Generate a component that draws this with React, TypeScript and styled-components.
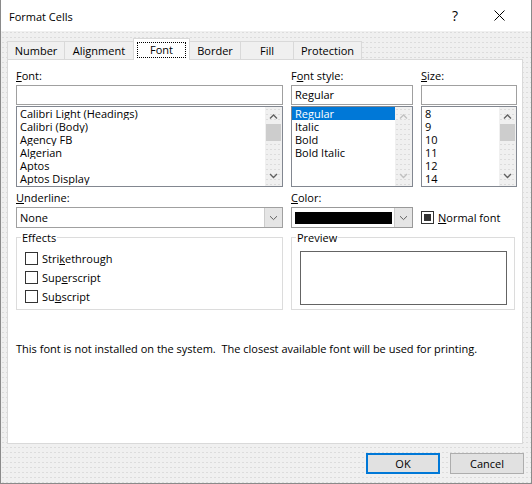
import React from "react";
import styled, { createGlobalStyle, css } from "styled-components";

const FONT = `"Open Sans", "Noto Sans", "DejaVu Sans", sans-serif`;

const GlobalStyle = createGlobalStyle`
  * { box-sizing: border-box; }
  html, body { margin: 0; padding: 0; background: #f0f0f0; }
  body { font-family: ${FONT}; font-size: 11px; color: #000; }
  #root { width: 532px; height: 484px; }
`;

const dotted = css`
  background-color: #f0f0f0;
  background-image: radial-gradient(circle, #dcdcdc 0.55px, transparent 0.9px);
  background-size: 4px 5px;
`;

const Window = styled.div`
  width: 532px;
  height: 484px;
  display: flex;
  flex-direction: column;
  border: 1px solid #8a8a8a;
  border-top: none;
  ${dotted}
`;

const TitleBar = styled.div`
  height: 31px;
  flex: none;
  background: #fff;
  display: flex;
  align-items: center;
  padding: 0 26px 0 8px;
`;

const Title = styled.div`
  flex: 1;
  font-size: 11px;
  padding-top: 1px;
`;

const HelpGlyph = styled.span`
  width: 12px;
  text-align: center;
  font-size: 14px;
  line-height: 1;
  margin-right: 33px;
`;

const Body = styled.div`
  flex: 1;
  display: flex;
  flex-direction: column;
  padding: 7px 8px 9px 6px;
`;

const TabStrip = styled.div`
  display: flex;
  align-items: flex-end;
  height: 21px;
  flex: none;
`;

const Tab = styled.div<{ $w: number; $active?: boolean }>`
  width: ${(p) => p.$w}px;
  height: ${(p) => (p.$active ? 22 : 18)}px;
  margin-bottom: ${(p) => (p.$active ? -1 : 0)}px;
  margin-left: -1px;
  &:first-child {
    margin-left: 0;
  }
  border: 1px solid #d9d9d9;
  border-bottom: none;
  background: ${(p) => (p.$active ? "#fff" : "#f0f0f0")};
  position: relative;
  z-index: ${(p) => (p.$active ? 1 : 0)};
  display: flex;
  align-items: center;
  justify-content: center;
  padding-top: 1px;
  line-height: 14px;
  white-space: nowrap;
`;

const FocusLabel = styled.span`
  border: 1px dotted #000;
  padding: 0 12px;
  line-height: 14px;
`;

const Panel = styled.div`
  flex: 1;
  background: #fff;
  border: 1px solid #d9d9d9;
  padding: 8px 5px 0 8px;
  display: flex;
  flex-direction: column;
`;

const Grid = styled.div`
  display: grid;
  grid-template-columns: 267px 122px 96px;
  column-gap: 8px;
  align-items: start;
`;

const Field = styled.div<{ $top?: number }>`
  display: flex;
  flex-direction: column;
  margin-top: ${(p) => p.$top ?? 0}px;
  min-width: 0;
`;

const Label = styled.div`
  line-height: 15px;
  margin-bottom: 2px;
  white-space: nowrap;
`;

const Mn = styled.span`
  text-decoration: underline;
  text-underline-offset: 1px;
`;

const TextBox = styled.div`
  height: 20px;
  border: 1px solid #a0a0a0;
  background: #fff;
  padding: 0 3px;
  line-height: 18px;
  white-space: nowrap;
`;

const ListBox = styled.div`
  margin-top: 1px;
  height: 81px;
  border: 1px solid #828790;
  background: #fff;
  display: flex;
  overflow: hidden;
`;

const Items = styled.div`
  flex: 1;
  min-width: 0;
  overflow: hidden;
`;

const Item = styled.div<{ $sel?: boolean }>`
  line-height: 13px;
  height: 13px;
  padding-left: 3px;
  white-space: nowrap;
  overflow: hidden;
  background: ${(p) => (p.$sel ? "#0078d7" : "transparent")};
  color: ${(p) => (p.$sel ? "#fff" : "#000")};
`;

const ScrollBar = styled.div`
  width: 17px;
  flex: none;
  display: flex;
  flex-direction: column;
  ${dotted}
`;

const ArrowBtn = styled.div`
  height: 17px;
  flex: none;
  display: flex;
`;

const Track = styled.div`
  flex: 1;
`;

const Thumb = styled.div`
  height: 17px;
  margin: 0 1px;
  background: #cdcdcd;
`;

const Combo = styled.div<{ $color?: boolean }>`
  height: 21px;
  border: 1px solid ${(p) => (p.$color ? "#999999" : "#a0a0a0")};
  background: #fff;
  display: flex;
  align-items: center;
`;

const ComboText = styled.div`
  flex: 1;
  padding-left: 3px;
  line-height: 19px;
`;

const ComboArrow = styled.div`
  width: 18px;
  align-self: stretch;
  background: #e5e5e5;
  border-left: 1px solid #cccccc;
  display: flex;
  align-items: center;
  justify-content: center;
`;

const Swatch = styled.div`
  flex: 1;
  height: 12px;
  background: #000;
  margin: 0 2px 0 3px;
`;

const CheckCell = styled.div`
  align-self: end;
  height: 21px;
  display: flex;
  align-items: center;
  gap: 4px;
  white-space: nowrap;
  padding-bottom: 1px;
`;

const Box = styled.div`
  width: 13px;
  height: 13px;
  flex: none;
  border: 1px solid #333;
  background: #fff;
  display: flex;
  align-items: center;
  justify-content: center;
`;

const BoxFill = styled.div`
  width: 7px;
  height: 7px;
  background: #333;
`;

const Group = styled.fieldset<{ $span?: boolean }>`
  margin: 2px 0 0 0;
  padding: 0;
  border: 1px solid #dcdcdc;
  min-width: 0;
  ${(p) =>
    p.$span &&
    css`
      grid-column: 2 / 4;
      margin-right: 2px;
    `}
`;

const Legend = styled.legend`
  margin-left: 4px;
  padding: 0 1px;
  line-height: 15px;
`;

const EffectsBody = styled.div`
  padding: 4px 0 3px 8px;
`;

const CheckRow = styled.div`
  height: 19px;
  display: flex;
  align-items: center;
  gap: 4px;
`;

const PreviewBox = styled.div`
  margin: 6px 7px 4px 8px;
  height: 54px;
  border: 1px solid #646464;
  background: #fff;
`;

const Message = styled.div`
  margin-top: 31px;
  line-height: 15px;
`;

const ButtonRow = styled.div`
  flex: none;
  display: flex;
  justify-content: flex-end;
  gap: 10px;
  margin-top: 9px;
  margin-right: -1px;
`;

const Button = styled.button<{ $default?: boolean }>`
  width: 74px;
  height: 21px;
  padding: 0;
  font: inherit;
  color: #000;
  background: #e1e1e1;
  border: ${(p) => (p.$default ? "2px solid #0078d7" : "1px solid #adadad")};
`;

const Chevron = ({ dir, color }: { dir: "up" | "down"; color: string }) => (
  <svg width="17" height="17" viewBox="0 0 17 17">
    <path
      d={dir === "up" ? "M5 11.5 L8.5 8 L12 11.5" : "M5 5 L8.5 8.5 L12 5"}
      fill="none"
      stroke={color}
      strokeWidth="1.3"
    />
  </svg>
);

const SmallChevron = () => (
  <svg width="9" height="6" viewBox="0 0 9 6">
    <path d="M1 1.2 L4.5 4.6 L8 1.2" fill="none" stroke="#606060" strokeWidth="1" />
  </svg>
);

const CloseIcon = () => (
  <svg width="11" height="11" viewBox="0 0 11 11">
    <path d="M0.5 0.5 L10.5 10.5 M10.5 0.5 L0.5 10.5" stroke="#000" strokeWidth="1" />
  </svg>
);

const Scroll = ({ disabled, thumb }: { disabled?: boolean; thumb?: boolean }) => {
  const c = disabled ? "#c0c0c0" : "#606060";
  return (
    <ScrollBar>
      <ArrowBtn>
        <Chevron dir="up" color={c} />
      </ArrowBtn>
      <Track>{thumb && <Thumb />}</Track>
      <ArrowBtn>
        <Chevron dir="down" color={c} />
      </ArrowBtn>
    </ScrollBar>
  );
};

const tabs: { label: string; w: number; active?: boolean }[] = [
  { label: "Number", w: 58 },
  { label: "Alignment", w: 70 },
  { label: "Font", w: 57, active: true },
  { label: "Border", w: 52 },
  { label: "Fill", w: 54 },
  { label: "Protection", w: 69 },
];

const fonts = [
  "Calibri Light (Headings)",
  "Calibri (Body)",
  "Agency FB",
  "Algerian",
  "Aptos",
  "Aptos Display",
];
const styles = ["Regular", "Italic", "Bold", "Bold Italic"];
const sizes = ["8", "9", "10", "11", "12", "14"];

export default function App() {
  return (
    <>
      <GlobalStyle />
      <Window>
        <TitleBar>
          <Title>Format Cells</Title>
          <HelpGlyph>?</HelpGlyph>
          <CloseIcon />
        </TitleBar>
        <Body>
          <TabStrip>
            {tabs.map((t) => (
              <Tab key={t.label} $w={t.w} $active={t.active}>
                {t.active ? <FocusLabel>{t.label}</FocusLabel> : t.label}
              </Tab>
            ))}
          </TabStrip>
          <Panel>
            <Grid>
              <Field>
                <Label>
                  <Mn>F</Mn>ont:
                </Label>
                <TextBox />
                <ListBox>
                  <Items>
                    {fonts.map((f) => (
                      <Item key={f}>{f}</Item>
                    ))}
                  </Items>
                  <Scroll thumb />
                </ListBox>
              </Field>
              <Field>
                <Label>
                  F<Mn>o</Mn>nt style:
                </Label>
                <TextBox>Regular</TextBox>
                <ListBox>
                  <Items>
                    {styles.map((s, i) => (
                      <Item key={s} $sel={i === 0}>
                        {s}
                      </Item>
                    ))}
                  </Items>
                  <Scroll disabled />
                </ListBox>
              </Field>
              <Field>
                <Label>
                  <Mn>S</Mn>ize:
                </Label>
                <TextBox />
                <ListBox>
                  <Items>
                    {sizes.map((s) => (
                      <Item key={s}>{s}</Item>
                    ))}
                  </Items>
                  <Scroll thumb />
                </ListBox>
              </Field>

              <Field $top={3}>
                <Label>
                  <Mn>U</Mn>nderline:
                </Label>
                <Combo>
                  <ComboText>None</ComboText>
                  <ComboArrow>
                    <SmallChevron />
                  </ComboArrow>
                </Combo>
              </Field>
              <Field $top={3}>
                <Label>
                  <Mn>C</Mn>olor:
                </Label>
                <Combo $color>
                  <Swatch />
                  <ComboArrow>
                    <SmallChevron />
                  </ComboArrow>
                </Combo>
              </Field>
              <CheckCell>
                <Box>
                  <BoxFill />
                </Box>
                <span>
                  <Mn>N</Mn>ormal font
                </span>
              </CheckCell>

              <Group>
                <Legend>Effects</Legend>
                <EffectsBody>
                  <CheckRow>
                    <Box />
                    <span>
                      Stri<Mn>k</Mn>ethrough
                    </span>
                  </CheckRow>
                  <CheckRow>
                    <Box />
                    <span>
                      Sup<Mn>e</Mn>rscript
                    </span>
                  </CheckRow>
                  <CheckRow>
                    <Box />
                    <span>
                      Su<Mn>b</Mn>script
                    </span>
                  </CheckRow>
                </EffectsBody>
              </Group>
              <Group $span>
                <Legend>Preview</Legend>
                <PreviewBox />
              </Group>
            </Grid>
            <Message>
              This font is not installed on the system.&nbsp; The closest available font will be used
              for printing.
            </Message>
          </Panel>
          <ButtonRow>
            <Button $default>OK</Button>
            <Button>Cancel</Button>
          </ButtonRow>
        </Body>
      </Window>
    </>
  );
}
